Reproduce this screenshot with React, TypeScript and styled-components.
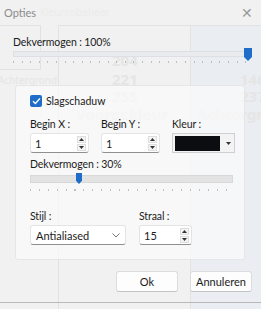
import React from "react";
import styled, { createGlobalStyle } from "styled-components";

const Global = createGlobalStyle`
  html, body { margin: 0; padding: 0; background: #f2f2f2; }
  body { font-family: Lato, "Noto Sans", sans-serif; }
  * { box-sizing: border-box; }
`;

const Screen = styled.div`
  position: relative;
  width: 261px;
  height: 309px;
  overflow: hidden;
  background: #f1f1f1;
`;

/* faint picture of the window underneath, seen through the dialog */
const Ghost = styled.div`
  position: absolute;
  inset: 0;
  z-index: 0;
  color: #e5e5e5;
  font-weight: 700;
  font-family: "Noto Sans", sans-serif;
`;

const GhostBox = styled.div<{ $x: number; $y: number; $w: number; $h: number; $bg?: string }>`
  position: absolute;
  left: ${(p) => p.$x}px;
  top: ${(p) => p.$y}px;
  width: ${(p) => p.$w}px;
  height: ${(p) => p.$h}px;
  border: 1px solid #e2e2e2;
  background: ${(p) => p.$bg || "transparent"};
`;

const GhostText = styled.span<{ $x: number; $y: number; $size: number }>`
  position: absolute;
  left: ${(p) => p.$x}px;
  top: ${(p) => p.$y}px;
  font-size: ${(p) => p.$size}px;
  line-height: 1;
  white-space: nowrap;
`;

const Dialog = styled.div`
  position: relative;
  z-index: 1;
  display: flex;
  flex-direction: column;
  height: 303px;
  border-bottom: 1px solid #b9b9b9;
`;

const TitleBar = styled.div`
  display: flex;
  align-items: center;
  justify-content: space-between;
  height: 25px;
  padding: 0 8px 0 4px;
  font-size: 11px;
  color: #8c8c8c;
`;

const Close = styled.span`
  font-size: 14px;
  font-weight: 300;
  color: #9a9a9a;
`;

const Top = styled.div`
  display: flex;
  flex-direction: column;
  padding: 9px 9px 0 13px;
`;

const Label = styled.div`
  font-size: 10.5px;
  letter-spacing: -0.1px;
  color: #1b1b1b;
  line-height: 16px;
  white-space: nowrap;
`;

const SliderBox = styled.div<{ $gap: number }>`
  display: flex;
  flex-direction: column;
  gap: ${(p) => p.$gap}px;
`;

const Track = styled.div<{ $inset?: boolean }>`
  position: relative;
  height: ${(p) => (p.$inset ? 8 : 6)}px;
  margin-top: ${(p) => (p.$inset ? 3 : 1)}px;
  background: ${(p) => (p.$inset ? "#e3e3e3" : "#e9ebef")};
  border: 1px solid ${(p) => (p.$inset ? "#d8d8d8" : "#dcdfe4")};
`;

const Thumb = styled.div<{ $big?: boolean }>`
  position: absolute;
  top: ${(p) => (p.$big ? -4 : -3)}px;
  width: ${(p) => (p.$big ? 8 : 6)}px;
  height: ${(p) => (p.$big ? 13 : 11)}px;
  background: #1f6dc8;
  clip-path: polygon(0 0, 100% 0, 100% 70%, 50% 100%, 0 70%);
`;

const Ticks = styled.div<{ $step: number }>`
  height: 2px;
  background: repeating-linear-gradient(
    to right,
    #9c9c9c 0 1px,
    transparent 1px ${(p) => p.$step}px
  );
  opacity: 0.6;
`;

const Slider = ({ pos, inset, step }: { pos: number; inset?: boolean; step: number }) => (
  <SliderBox $gap={inset ? 6 : 4}>
    <Track $inset={inset}>
      <Thumb $big={!inset} style={{ left: pos }} />
    </Track>
    <Ticks $step={step} />
  </SliderBox>
);

const Panel = styled.div`
  display: flex;
  flex-direction: column;
  margin: 22px 16px 0 15px;
  padding: 8px 11px 14px 14px;
  background: rgba(249, 249, 249, 0.75);
  border: 1px solid #e6e6e6;
  border-radius: 3px;
`;

const CheckRow = styled.label`
  display: flex;
  align-items: center;
  gap: 4px;
  font-size: 10.5px;
  line-height: 14px;
  color: #1b1b1b;
`;

const Box = styled.span`
  display: flex;
  align-items: center;
  justify-content: center;
  width: 12px;
  height: 12px;
  border-radius: 2px;
  background: #1f6dc8;
`;

const Row = styled.div<{ $gap: number; $top: number }>`
  display: flex;
  gap: ${(p) => p.$gap}px;
  margin-top: ${(p) => p.$top}px;
`;

const Field = styled.div`
  display: flex;
  flex-direction: column;
  gap: 1px;
`;

const Input = styled.div<{ $w: number }>`
  display: flex;
  align-items: center;
  justify-content: space-between;
  width: ${(p) => p.$w}px;
  height: 20px;
  padding: 0 2px 0 4px;
  background: #fff;
  border: 1px solid #e4e4e4;
  border-bottom: 1px solid #8f8f8f;
  border-radius: 3px;
  font-size: 11px;
  color: #1b1b1b;
`;

const Spin = styled.div`
  display: flex;
  flex-direction: column;
  gap: 1px;
`;

const SpinBtn = styled.span`
  display: flex;
  align-items: center;
  justify-content: center;
  width: 9px;
  height: 7px;
  background: #f3f3f3;
  border: 1px solid #dedede;
`;

const Arrow = ({ up }: { up?: boolean }) => (
  <svg width="5" height="3" viewBox="0 0 5 3">
    <path d={up ? "M0 3 L2.5 0 L5 3 Z" : "M0 0 L2.5 3 L5 0 Z"} fill="#333" />
  </svg>
);

const Spinner = () => (
  <Spin>
    <SpinBtn><Arrow up /></SpinBtn>
    <SpinBtn><Arrow /></SpinBtn>
  </Spin>
);

const ColorPick = styled.div`
  display: flex;
  align-items: center;
  gap: 6px;
  width: 63px;
  height: 20px;
  padding: 2px;
  background: #f3f3f3;
  border: 1px solid #cfcfcf;
`;

const Swatch = styled.span`
  width: 45px;
  height: 15px;
  background: #0c0d10;
`;

const Select = styled(Input)`
  padding: 0 5px 0 5px;
`;

const Sub = styled.div`
  display: flex;
  flex-direction: column;
  margin-top: 3px;
`;

const Footer = styled.div`
  display: flex;
  justify-content: flex-end;
  gap: 12px;
  margin-top: 11px;
  padding-right: 9px;
`;

const Button = styled.button`
  width: 62px;
  height: 21px;
  padding: 0;
  font-family: inherit;
  font-size: 11px;
  color: #1b1b1b;
  background: #fdfdfd;
  border: 1px solid #dcdcdc;
  border-bottom-color: #c4c4c4;
  border-radius: 3px;
`;

export default function App() {
  return (
    <Screen>
      <Global />
      <Ghost>
        <GhostText $x={40} $y={7} $size={10} style={{ color: "#ececec", fontWeight: 400 }}>
          Kleurenbeheer
        </GhostText>
        <GhostBox $x={-1} $y={25} $w={42} $h={45} />
        <GhostBox $x={58} $y={25} $w={133} $h={300} />
        <GhostBox $x={190} $y={25} $w={80} $h={300} $bg="#eaedf1" />
        <GhostText $x={112} $y={53} $size={15}>204</GhostText>
        <GhostText $x={112} $y={72} $size={15}>221</GhostText>
        <GhostText $x={112} $y={89} $size={15}>255</GhostText>
        <GhostText $x={76} $y={107} $size={15}>Voorgr.kleur</GhostText>
        <GhostText $x={197} $y={107} $size={15}>Achtergr</GhostText>
        <GhostText $x={240} $y={72} $size={15}>146</GhostText>
        <GhostText $x={240} $y={89} $size={15}>237</GhostText>
        <GhostText $x={-2} $y={75} $size={10} style={{ fontWeight: 400 }}>Achtergrond</GhostText>
      </Ghost>

      <Dialog>
        <TitleBar>
          <span>Opties</span>
          <Close>✕</Close>
        </TitleBar>

        <Top>
          <Label>Dekvermogen : 100%</Label>
          <Slider pos={230} step={8.6} />
        </Top>

        <Panel>
          <CheckRow>
            <Box>
              <svg width="9" height="8" viewBox="0 0 9 8">
                <path d="M1 4.2 L3.4 6.5 L8 1.4" fill="none" stroke="#fff" strokeWidth="1.4" />
              </svg>
            </Box>
            Slagschaduw
          </CheckRow>

          <Row $gap={12} $top={8}>
            <Field>
              <Label>Begin X :</Label>
              <Input $w={59}>1<Spinner /></Input>
            </Field>
            <Field>
              <Label>Begin Y :</Label>
              <Input $w={59}>1<Spinner /></Input>
            </Field>
            <Field>
              <Label>Kleur :</Label>
              <ColorPick>
                <Swatch />
                <Arrow />
              </ColorPick>
            </Field>
          </Row>

          <Sub>
            <Label>Dekvermogen : 30%</Label>
            <Slider pos={45} inset step={8.9} />
          </Sub>

          <Row $gap={13} $top={17}>
            <Field>
              <Label>Stijl :</Label>
              <Select $w={96}>
                Antialiased
                <svg width="8" height="5" viewBox="0 0 8 5">
                  <path d="M0.5 0.5 L4 4 L7.5 0.5" fill="none" stroke="#666" strokeWidth="0.9" />
                </svg>
              </Select>
            </Field>
            <Field>
              <Label>Straal :</Label>
              <Input $w={53}>15<Spinner /></Input>
            </Field>
          </Row>
        </Panel>

        <Footer>
          <Button>Ok</Button>
          <Button>Annuleren</Button>
        </Footer>
      </Dialog>
    </Screen>
  );
}
